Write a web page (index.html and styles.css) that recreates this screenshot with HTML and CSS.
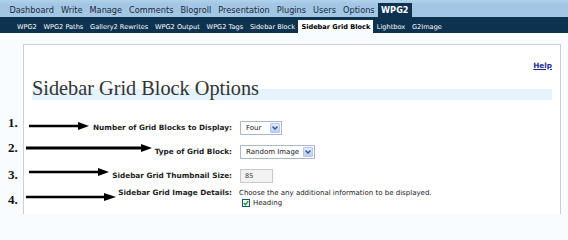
FILE: index.html
```html
<!DOCTYPE html>
<html>
<head>
<meta charset="utf-8">
<link rel="stylesheet" href="styles.css">
</head>
<body>
<nav class="adminmenu">
  <a>Dashboard</a><a>Write</a><a>Manage</a><a>Comments</a><a>Blogroll</a><a>Presentation</a><a>Plugins</a><a>Users</a><a>Options</a><a class="current">WPG2</a>
</nav>
<nav class="submenu">
  <a>WPG2</a><a>WPG2 Paths</a><a>Gallery2 Rewrites</a><a>WPG2 Output</a><a>WPG2 Tags</a><a>Sidebar Block</a><a class="current">Sidebar Grid Block</a><a>Lightbox</a><a>G2Image</a>
</nav>
<div class="wrap">
  <div class="help-line"><a class="help">Help</a></div>
  <h2 class="title">Sidebar Grid Block Options</h2>
  <div class="form">
    <div class="row r1">
      <span class="num">1.</span>
      <svg class="arrow" width="60" height="8" viewBox="0 0 60 8"><line x1="0" y1="4" x2="50" y2="4" stroke="#000" stroke-width="2.5"/><polygon points="49,0 60,4 49,8" fill="#000"/></svg>
      <label class="lbl">Number of Grid Blocks to Display:</label>
      <div class="field">
        <span class="select w1"><span class="val">Four</span><span class="btn"><svg width="6" height="4" viewBox="0 0 6 4"><polyline points="0.5,0.5 3,3 5.5,0.5" fill="none" stroke="#2d4fa0" stroke-width="1.4"/></svg></span></span>
      </div>
    </div>
    <div class="row r2">
      <span class="num">2.</span>
      <svg class="arrow" width="126" height="8" viewBox="0 0 126 8"><line x1="0" y1="4" x2="116" y2="4" stroke="#000" stroke-width="3"/><polygon points="115,0 126,4 115,8" fill="#000"/></svg>
      <label class="lbl">Type of Grid Block:</label>
      <div class="field">
        <span class="select w2"><span class="val">Random Image</span><span class="btn"><svg width="6" height="4" viewBox="0 0 6 4"><polyline points="0.5,0.5 3,3 5.5,0.5" fill="none" stroke="#2d4fa0" stroke-width="1.4"/></svg></span></span>
      </div>
    </div>
    <div class="row r3">
      <span class="num">3.</span>
      <svg class="arrow" width="80" height="8" viewBox="0 0 80 8"><line x1="0" y1="4" x2="70" y2="4" stroke="#000" stroke-width="2.5"/><polygon points="69,0 80,4 69,8" fill="#000"/></svg>
      <label class="lbl">Sidebar Grid Thumbnail Size:</label>
      <div class="field">
        <span class="textinput">85</span>
      </div>
    </div>
    <div class="row r4">
      <span class="num">4.</span>
      <svg class="arrow" width="90" height="8" viewBox="0 0 90 8"><line x1="0" y1="4" x2="79" y2="4" stroke="#000" stroke-width="2.5"/><polygon points="78,0 90,4 78,8" fill="#000"/></svg>
      <label class="lbl">Sidebar Grid Image Details:</label>
      <div class="field details">
        <div class="desc">Choose the any additional information to be displayed.</div>
        <div class="check-line"><span class="checkbox"><svg width="6" height="6" viewBox="0 0 6 6"><polyline points="0.8,3 2.4,4.6 5.2,1.2" fill="none" stroke="#21a121" stroke-width="1.4"/></svg></span><span>Heading</span></div>
      </div>
    </div>
  </div>
</div>
</body>
</html>
```

FILE: styles.css
```css
html, body {
  margin: 0;
  padding: 0;
}
body {
  background: #f9fcfe;
  font-family: "DejaVu Sans", Verdana, sans-serif;
  color: #333;
  width: 568px;
  height: 215px;
  overflow: hidden;
}
.adminmenu {
  display: flex;
  align-items: flex-end;
  height: 17px;
  box-sizing: border-box;
  padding: 3px 0 0 6px;
  background: linear-gradient(#b2d2ea, #a2c6e4 4px);
}
.adminmenu a {
  display: flex;
  align-items: center;
  height: 14px;
  padding: 0 3.5px;
  font-size: 8.2px;
  color: #1a2a3a;
}
.adminmenu a.current {
  background: #0d324f;
  color: #fff;
  font-weight: bold;
  padding: 0 3px;
}
.submenu {
  display: flex;
  align-items: flex-end;
  height: 16px;
  box-sizing: border-box;
  padding: 3px 0 0 13.5px;
  background: #0d324f;
}
.submenu a {
  display: flex;
  align-items: center;
  height: 13px;
  padding: 0 3.4px;
  font-size: 6.6px;
  color: #fff;
}
.submenu a.current {
  background: #fcfdfe;
  color: #000;
  font-weight: bold;
  padding: 0 3px;
}
.wrap {
  margin: 11px 7px 0 23px;
  background: #fff;
  border: 1px solid #cfcfcf;
  border-bottom: none;
  height: 170px;
  box-sizing: border-box;
  padding: 16px 8px 0 0;
}
.help-line {
  display: flex;
  justify-content: flex-end;
  height: 10px;
  line-height: 10px;
}
.help {
  font-size: 7.3px;
  font-weight: bold;
  color: #1a2d8f;
  text-decoration: underline;
}
.title {
  margin: 17px 0 0 8px;
  padding: 0;
  font-family: "Liberation Serif", "Times New Roman", serif;
  font-weight: normal;
  font-size: 20.3px;
  line-height: 1px;
  color: #333;
  border-bottom: 11px solid #e5f3ff;
}
.form {
  margin-top: 21px;
  display: flex;
  flex-direction: column;
}
.row {
  position: relative;
  display: grid;
  grid-template-columns: 208px 1fr;
  column-gap: 8px;
  align-items: center;
  height: 14px;
  margin-bottom: 10px;
}
.row.r3 {
  margin-bottom: 5px;
}
.row.r4 {
  align-items: start;
  height: auto;
}
.num {
  position: absolute;
  left: -16px;
  font-family: "Liberation Serif", "Times New Roman", serif;
  font-weight: bold;
  font-size: 13px;
  line-height: 13px;
  color: #111;
}
.r1 .num { top: -5.5px; }
.r2 .num { top: -4.5px; }
.r3 .num { top: -1.5px; }
.r4 .num { top: 4.5px; }
.arrow {
  position: absolute;
  display: block;
}
.r1 .arrow { left: 5px; top: 1px; }
.r2 .arrow { left: 2px; top: -1px; }
.r3 .arrow { left: 5px; top: -1px; }
.r4 .arrow { left: 2px; top: 5px; }
.lbl {
  text-align: right;
  font-weight: bold;
  font-size: 7.3px;
  line-height: 10px;
  color: #222;
}
.field {
  font-size: 7px;
  color: #222;
}
.select {
  display: flex;
  align-items: center;
  justify-content: space-between;
  box-sizing: border-box;
  height: 14px;
  border: 1px solid #a9b8c9;
  background: #fff;
  padding: 0 1px 0 5px;
}
.select.w1 { width: 42px; }
.select.w2 { width: 75px; }
.select .val {
  font-size: 7px;
  color: #222;
}
.select .btn {
  display: flex;
  align-items: center;
  justify-content: center;
  width: 10px;
  height: 10px;
  box-sizing: border-box;
  border: 1px solid #b6c9ef;
  background: linear-gradient(#e4ecfd, #bccbf3);
  border-radius: 1px;
}
.textinput {
  display: flex;
  align-items: center;
  box-sizing: border-box;
  width: 33px;
  height: 14px;
  border: 1px solid #c9c9c9;
  background: #f2f2f2;
  padding-left: 4px;
  font-size: 6.5px;
  color: #333;
}
.details .desc {
  line-height: 10px;
  margin-left: -1px;
}
.check-line {
  display: flex;
  align-items: center;
  gap: 3px;
  margin-left: 2px;
  line-height: 10px;
}
.checkbox {
  display: flex;
  align-items: center;
  justify-content: center;
  width: 8px;
  height: 8px;
  box-sizing: border-box;
  border: 1px solid #1c5180;
  background: #f4f4ee;
}
```
